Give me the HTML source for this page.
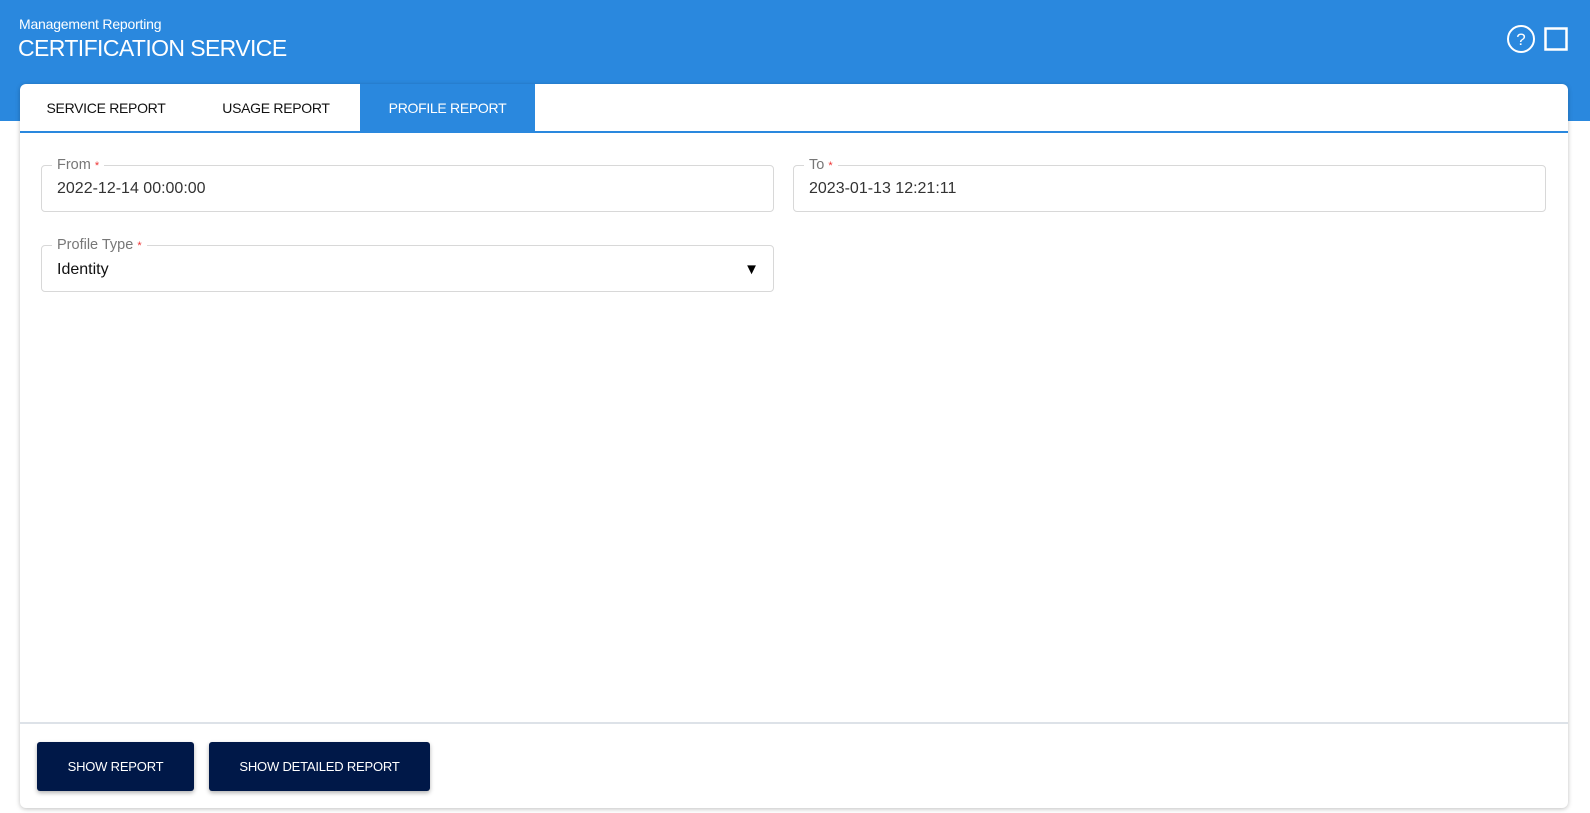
<!DOCTYPE html>
<html><head><meta charset="utf-8"><style>
*{box-sizing:border-box;margin:0;padding:0}
body{width:1590px;height:813px;background:#fff;font-family:"Liberation Sans",sans-serif;position:relative;overflow:hidden}
.hdr{position:absolute;left:0;top:0;width:1590px;height:121px;background:#2a88de}
.t1{position:absolute;left:19px;top:16px;color:#fff;font-size:14px;letter-spacing:-0.2px}
.t2{position:absolute;left:18px;top:35px;color:#fff;font-size:23px;letter-spacing:-0.6px}
.card{position:absolute;left:20px;top:84px;width:1548px;height:724px;background:#fff;border-radius:6px;box-shadow:0 1px 5px rgba(0,0,0,.25)}
.tabs{position:absolute;left:0;top:0;width:100%;height:49px;border-bottom:2px solid #2a88de}
.tab{position:absolute;top:0;height:47px;line-height:49px;font-size:14px;letter-spacing:-0.3px;color:#111;text-align:center}
.tab.act{background:#2a88de;color:#fff}
.fld{position:absolute;border:1px solid #d8d8d8;border-radius:4px;height:47px}
.lbl{position:absolute;left:10px;top:-9px;background:#fff;padding:0 5px;font-size:14.5px;color:#777}
.lbl b{color:#e33;font-weight:normal;font-size:11px}
.val{position:absolute;left:15px;top:14px;font-size:16px;color:#333}
.foot{position:absolute;left:0;top:638px;width:100%;border-top:2px solid #dde2e8}
.btn{position:absolute;top:658px;height:49px;background:#001848;color:#fff;font-size:13px;letter-spacing:-0.2px;line-height:49px;text-align:center;border-radius:3px;box-shadow:0 2px 4px rgba(0,0,0,.3)}
</style></head><body>
<div class="hdr">
<div class="t1">Management Reporting</div>
<div class="t2">CERTIFICATION SERVICE</div>
<svg style="position:absolute;left:1505px;top:24px" width="66" height="32">
<circle cx="16" cy="15" r="13" fill="none" stroke="#fff" stroke-width="2"/>
<text x="16" y="21" fill="#fff" font-size="17" text-anchor="middle" font-family="Liberation Sans">?</text>
<rect x="40.5" y="4.5" width="21" height="21" fill="none" stroke="#fff" stroke-width="2.5"/>
</svg>
</div>
<div class="card">
<div class="tabs">
<div class="tab" style="left:0;width:172px">SERVICE REPORT</div>
<div class="tab" style="left:172px;width:168px">USAGE REPORT</div>
<div class="tab act" style="left:340px;width:175px">PROFILE REPORT</div>
</div>
<div class="fld" style="left:21px;top:81px;width:733px"><div class="lbl">From <b>*</b></div><div class="val">2022-12-14 00:00:00</div></div>
<div class="fld" style="left:773px;top:81px;width:753px"><div class="lbl">To <b>*</b></div><div class="val">2023-01-13 12:21:11</div></div>
<div class="fld" style="left:21px;top:161px;width:733px"><div class="lbl">Profile Type <b>*</b></div><div class="val" style="color:#111;top:15px">Identity</div><div style="position:absolute;right:14px;top:15px;font-size:15px">▼</div></div>
<div class="foot"></div>
<div class="btn" style="left:17px;width:157px">SHOW REPORT</div>
<div class="btn" style="left:189px;width:221px">SHOW DETAILED REPORT</div>
</div>
</body></html>
